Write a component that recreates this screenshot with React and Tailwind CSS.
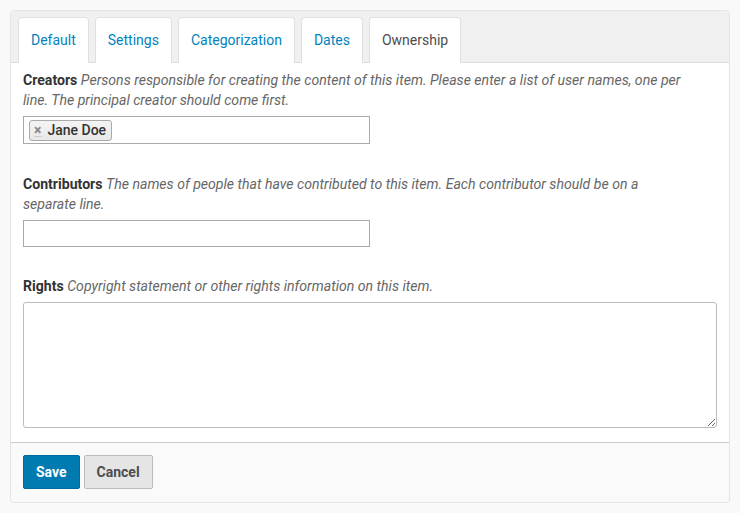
import React from 'react';

const tabs = ['Default', 'Settings', 'Categorization', 'Dates', 'Ownership'];

const Field = ({ label, help, children }) => (
  <div>
    <p className="max-w-[665px] text-[14.1px] leading-[20px] text-[#4d4d4d]">
      <span className="font-bold text-[#333]">{label}</span>{' '}
      <span className="italic text-[#666]">{help}</span>
    </p>
    {children}
  </div>
);

const App = () => {
  const active = 'Ownership';

  return (
    <div className="w-[740px] h-[513px] bg-[#f9f9f9] pt-[10px] px-[10px] font-['Roboto',sans-serif]">
      <div className="w-[720px] h-[493px] border border-[#e5e5e5] rounded-[4px] bg-[#fafafa] flex flex-col overflow-hidden">
        <div className="bg-[#f0f0f0] h-[52px] flex items-end gap-[6px] px-[7px] border-b border-[#ddd]">
          {tabs.map((t) => (
            <div
              key={t}
              className={`h-[46px] px-[12px] flex items-center text-[14px] rounded-t-[4px] border border-b-0 border-[#e0e0e0] bg-white -mb-px ${
                t === active ? 'text-[#4d4d4d]' : 'text-[#0083be]'
              }`}
            >
              {t}
            </div>
          ))}
        </div>
        <div className="bg-white h-[380px] px-[12px] pt-[7px] border-b border-[#ccc] flex flex-col">
          <Field
            label="Creators"
            help="Persons responsible for creating the content of this item. Please enter a list of user names, one per line. The principal creator should come first."
          >
            <div className="mt-[6px] w-[347px] h-[28px] border border-[#aaa] flex items-center px-[5px]">
              <div className="h-[21px] flex items-center gap-[6px] pl-[4px] pr-[5px] border border-[#aaa] rounded-[3px] bg-gradient-to-b from-[#f4f4f4] to-[#e8e8e8] text-[14px] text-[#333]">
                <span className="text-[14px] text-[#888] font-bold leading-none underline decoration-[#ccc]">×</span>
                <span className="font-medium">Jane Doe</span>
              </div>
            </div>
          </Field>
          <div className="h-[30px]" />
          <Field
            label="Contributors"
            help="The names of people that have contributed to this item. Each contributor should be on a separate line."
          >
            <div className="mt-[6px] w-[347px] h-[27px] border border-[#aaa]" />
          </Field>
          <div className="h-[29px]" />
          <Field label="Rights" help="Copyright statement or other rights information on this item." />
          <textarea className="mt-[6px] w-[694px] h-[126px] border border-[#bbb] rounded-[3px] resize-y" />
        </div>
        <div className="flex gap-[4px] px-[12px] pt-[12px]">
          <button className="h-[34px] px-[12px] bg-[#007bb1] border border-[#006a99] rounded-[2px] text-white text-[14px] font-bold">
            Save
          </button>
          <button className="h-[34px] px-[12px] bg-[#e5e5e5] border border-[#bbb] rounded-[2px] text-[#4d4d4d] text-[14px] font-bold">
            Cancel
          </button>
        </div>
      </div>
    </div>
  );
};

export default App;
